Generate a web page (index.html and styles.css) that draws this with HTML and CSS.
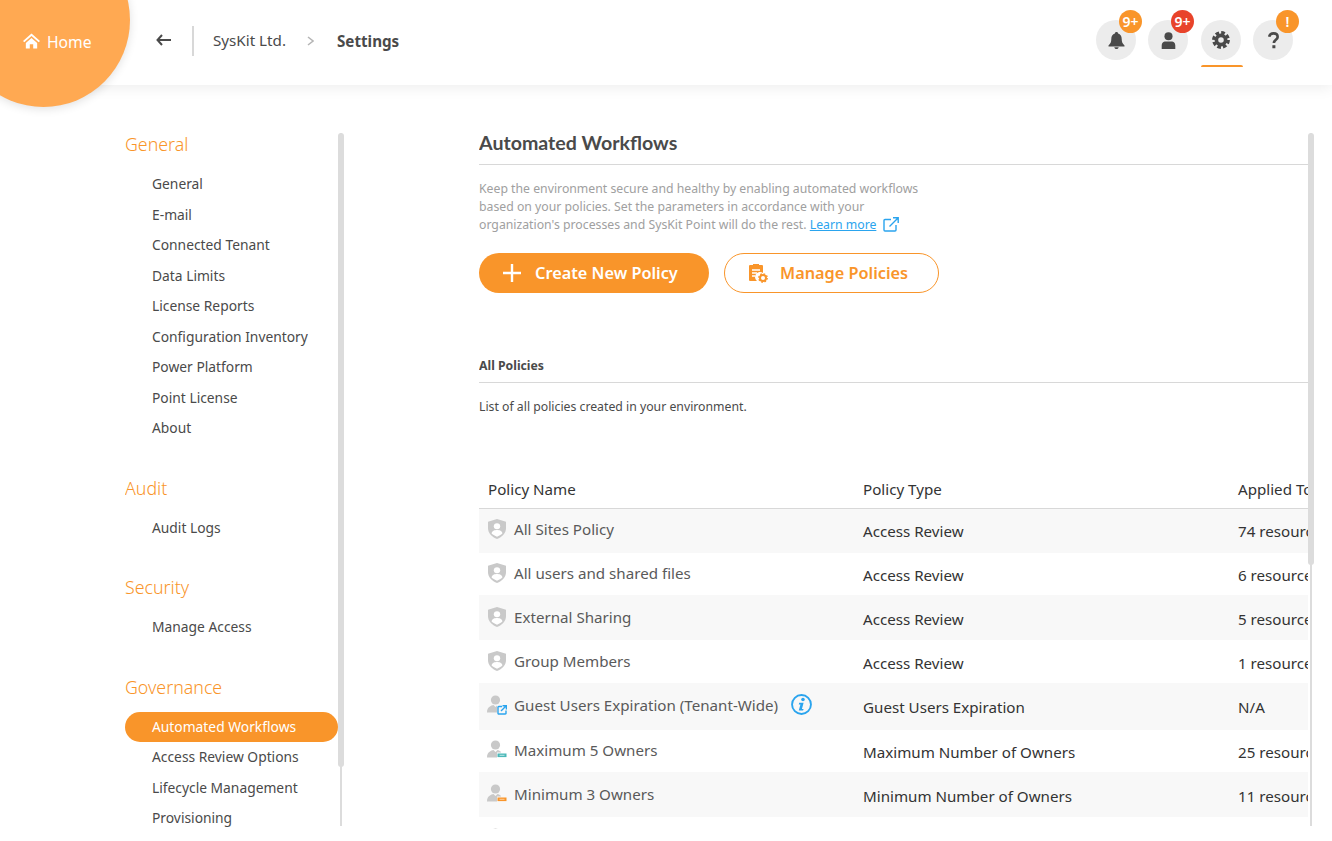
FILE: index.html
```html
<!DOCTYPE html>
<html lang="en">
<head>
  <meta charset="UTF-8">
  <meta name="viewport" content="width=device-width, initial-scale=1.0">
  <title>Settings</title>
  <link rel="stylesheet" href="styles.css">
</head>
<body>
  <svg class="defs" width="0" height="0">
    <symbol id="shield" viewBox="0 0 18 22" preserveAspectRatio="none">
      <path d="M9 0 L18 3 V10 C18 16 14 20 9 22 C4 20 0 16 0 10 V3 Z" fill="#c9c9c9"/>
      <circle cx="9" cy="8" r="3.2" fill="#fff"/>
      <path d="M3.6 16 C4 12.6 6.4 12 9 12 C11.6 12 14 12.6 14.4 16 C12.8 17.6 11 18.6 9 19.4 C7 18.6 5.2 17.6 3.6 16 Z" fill="#fff"/>
    </symbol>
    <symbol id="owner" viewBox="0 0 20 18">
      <circle cx="8.5" cy="5" r="4.6" fill="#c9c9c9"/>
      <path d="M0 17.5 C0 12 4 10.5 6.5 10 L8.5 12 L10.5 10 C12 10.3 13 11 14 12 V17.5 Z" fill="#c9c9c9"/>
    </symbol>
  </svg>

  <header class="topbar">
    <a class="home" href="#">
      <svg class="home-icon" viewBox="0 0 18 16"><path d="M9 0 L18 8 L16.6 9.4 L9 2.8 L1.4 9.4 L0 8 Z M3 10 L9 4.8 L15 10 V16 H10.8 V11.5 H7.2 V16 H3 Z" fill="#fff"/></svg>
      Home
    </a>
    <div class="crumbs">
      <svg class="back" viewBox="0 0 15 12"><path d="M6 1 L1.5 6 L6 11 M2 6 H15" fill="none" stroke="#4a4a4a" stroke-width="2"/></svg>
      <span class="crumb-sep"></span>
      <span class="crumb">SysKit Ltd.</span>
      <svg class="chevron" viewBox="0 0 7 10"><path d="M1 1 L6 5 L1 9" fill="none" stroke="#b5b5b5" stroke-width="1.5"/></svg>
      <strong class="crumb-current">Settings</strong>
    </div>
    <div class="actions">
      <div class="action">
        <svg viewBox="0 0 16 17"><path d="M8 0 C9 0 9.6 .7 9.6 1.6 C12 2.2 13.2 4.2 13.2 7 C13.2 10 14 11.6 16 13.4 V14.4 H0 V13.4 C2 11.6 2.8 10 2.8 7 C2.8 4.2 4 2.2 6.4 1.6 C6.4 .7 7 0 8 0 Z M5.8 15.2 H10.2 C10 16.4 9.2 17 8 17 C6.8 17 6 16.4 5.8 15.2 Z" fill="#4a4a4a"/></svg>
        <span class="badge badge-orange">9+</span>
      </div>
      <div class="action">
        <svg viewBox="0 0 14 16"><circle cx="7" cy="4" r="3.8" fill="#4a4a4a"/><path d="M0.6 16 V13 C0.6 10 2.4 9 4 9 H10 C11.6 9 13.4 10 13.4 13 V16 Z" fill="#4a4a4a"/></svg>
        <span class="badge badge-red">9+</span>
      </div>
      <div class="action action-active">
        <svg class="gear" viewBox="0 0 18 18"><circle cx="9" cy="9" r="7.2" fill="none" stroke="#4a4a4a" stroke-width="3.4" stroke-dasharray="3.6 2.05"/><circle cx="9" cy="9" r="4.6" fill="none" stroke="#4a4a4a" stroke-width="3.6"/></svg>
      </div>
      <div class="action">
        <svg viewBox="0 0 12 18"><path d="M1.5 5 C1.8 2.6 3.6 1.5 6 1.5 C8.6 1.5 10.4 3 10.4 5.2 C10.4 8.2 6.4 8.2 6.4 11.6" fill="none" stroke="#4a4a4a" stroke-width="2.8"/><rect x="4.8" y="14" width="3.2" height="3.2" fill="#4a4a4a"/></svg>
        <span class="badge badge-orange">!</span>
      </div>
    </div>
  </header>

  <div class="layout">
    <nav class="sidenav">
      <div class="nav-list">
        <h3>General</h3>
        <ul>
          <li>General</li>
          <li>E-mail</li>
          <li>Connected Tenant</li>
          <li>Data Limits</li>
          <li>License Reports</li>
          <li>Configuration Inventory</li>
          <li>Power Platform</li>
          <li>Point License</li>
          <li>About</li>
        </ul>
        <h3>Audit</h3>
        <ul>
          <li>Audit Logs</li>
        </ul>
        <h3>Security</h3>
        <ul>
          <li>Manage Access</li>
        </ul>
        <h3>Governance</h3>
        <ul>
          <li class="active">Automated Workflows</li>
          <li>Access Review Options</li>
          <li>Lifecycle Management</li>
          <li>Provisioning</li>
        </ul>
      </div>
      <div class="scrollbar"><span class="thumb thumb-nav"></span></div>
    </nav>

    <main class="content">
      <div class="content-inner">
        <h1>Automated Workflows</h1>
        <p class="intro">Keep the environment secure and healthy by enabling automated workflows based on your policies. Set the parameters in accordance with your organization's processes and SysKit Point will do the rest. <a href="#">Learn more</a>
          <svg class="ext" viewBox="0 0 16 15"><path d="M8 2.5 H2 A1 1 0 0 0 1 3.5 V13 A1 1 0 0 0 2 14 H12 A1 1 0 0 0 13 13 V8 M6.5 9.5 L15 1 M10 .8 H15.2 V6" fill="none" stroke="#2aa4ee" stroke-width="1.4"/></svg>
        </p>
        <div class="buttons">
          <button class="btn btn-primary">
            <svg viewBox="0 0 18 18"><path d="M9 0 V18 M0 9 H18" stroke="#fff" stroke-width="2.4"/></svg>
            Create New Policy
          </button>
          <button class="btn btn-outline">
            <svg viewBox="0 0 20 20"><path d="M2 2 H5 V1 H11 V2 H14 C15 2 15 3 15 3 V10 A5 5 0 0 0 9 18 H2 C1 18 1 17 1 17 V3 C1 3 1 2 2 2 Z" fill="#f9952a"/><path d="M4 7 H12 M4 10 H9 M4 13 H7" stroke="#fff" stroke-width="1.3"/><circle cx="15" cy="15" r="3" fill="none" stroke="#f9952a" stroke-width="2"/><circle cx="15" cy="15" r="4.2" fill="none" stroke="#f9952a" stroke-width="1.4" stroke-dasharray="1.6 1.7"/></svg>
            Manage Policies
          </button>
        </div>

        <h2>All Policies</h2>
        <p class="sub">List of all policies created in your environment.</p>

        <table class="policies">
          <thead>
            <tr><th>Policy Name</th><th>Policy Type</th><th>Applied To</th></tr>
          </thead>
          <tbody>
            <tr>
              <td><span class="name"><svg class="ico"><use href="#shield"/></svg>All Sites Policy</span></td>
              <td>Access Review</td><td>74 resources</td>
            </tr>
            <tr>
              <td><span class="name"><svg class="ico"><use href="#shield"/></svg>All users and shared files</span></td>
              <td>Access Review</td><td>6 resources</td>
            </tr>
            <tr>
              <td><span class="name"><svg class="ico"><use href="#shield"/></svg>External Sharing</span></td>
              <td>Access Review</td><td>5 resources</td>
            </tr>
            <tr>
              <td><span class="name"><svg class="ico"><use href="#shield"/></svg>Group Members</span></td>
              <td>Access Review</td><td>1 resource</td>
            </tr>
            <tr>
              <td><span class="name">
                <svg class="ico ico-owner" viewBox="0 0 20 20"><use href="#owner" width="20" height="18"/><path d="M10 10 H20 V20 H10 Z" fill="#f8f8f8"/><path d="M15 11.5 H12 A.8 .8 0 0 0 11 12.5 V18.2 A.8 .8 0 0 0 12 19 H18 A.8 .8 0 0 0 19 18 V15.5 M14 16 L19 11 M15.5 10.8 H19.4 V14.6" fill="none" stroke="#2aa4ee" stroke-width="1.4"/></svg>
                Guest Users Expiration (Tenant-Wide)
                <svg class="info" viewBox="0 0 20 20"><circle cx="10" cy="10" r="9" fill="none" stroke="#2aa4ee" stroke-width="1.8"/><circle cx="11.4" cy="5.2" r="1.7" fill="#2aa4ee"/><path d="M7.8 8.4 H12 L10.4 14.2 H12 L11.5 15.8 H7.4 L9 10 H7.4 Z" fill="#2aa4ee"/></svg>
              </span></td>
              <td>Guest Users Expiration</td><td>N/A</td>
            </tr>
            <tr>
              <td><span class="name">
                <svg class="ico ico-owner" viewBox="0 0 20 20"><use href="#owner" width="20" height="18"/><rect x="10" y="12.5" width="10" height="5.5" fill="#fff"/><rect x="10.5" y="13.5" width="9" height="3.6" fill="#4bb8b8"/><path d="M12.5 15.3 H17.5" stroke="#bfe6e6" stroke-width="1"/></svg>
                Maximum 5 Owners
              </span></td>
              <td>Maximum Number of Owners</td><td>25 resources</td>
            </tr>
            <tr>
              <td><span class="name">
                <svg class="ico ico-owner" viewBox="0 0 20 20"><use href="#owner" width="20" height="18"/><rect x="10" y="12.5" width="10" height="5.5" fill="#f8f8f8"/><rect x="10.5" y="13.5" width="9" height="3.6" fill="#f9952a"/><path d="M12.5 15.3 H17.5" stroke="#fcd09f" stroke-width="1"/></svg>
                Minimum 3 Owners
              </span></td>
              <td>Minimum Number of Owners</td><td>11 resources</td>
            </tr>
            <tr>
              <td><span class="name"><svg class="ico ico-owner" viewBox="0 0 20 20"><use href="#owner" width="20" height="18"/></svg>Owners Policy</span></td>
              <td>Minimum Number of Owners</td><td>3 resources</td>
            </tr>
          </tbody>
        </table>
      </div>
      <div class="scrollbar"><span class="thumb thumb-main"></span></div>
    </main>
  </div>
</body>
</html>
```

FILE: styles.css
```css
* {
  box-sizing: border-box;
}
html, body {
  height: 100%;
}
body {
  margin: 0;
  overflow: hidden;
  background: #fff;
  color: #4a4a4a;
  font-family: "Noto Sans", "Open Sans", sans-serif;
  font-size: 14px;
}
.defs {
  position: absolute;
}

/* top bar */
.topbar {
  position: relative;
  display: flex;
  align-items: center;
  justify-content: space-between;
  height: 85px;
  padding: 0 39px 0 156px;
  background: #fff;
  box-shadow: 0 2px 14px rgba(0, 0, 0, 0.08);
}
.home {
  position: absolute;
  left: -43px;
  top: -67px;
  width: 173px;
  height: 174px;
  border-radius: 50%;
  background: #ffa952;
  box-shadow: 0 2px 10px rgba(0, 0, 0, 0.12);
  color: #fff;
  font-size: 15.7px;
  text-decoration: none;
  display: flex;
  align-items: center;
  padding: 44px 0 0 66px;
  gap: 7px;
  white-space: nowrap;
}
.home-icon {
  width: 17px;
  height: 16px;
  margin-top: -2px;
}
.crumbs {
  display: flex;
  align-items: center;
  font-size: 15.2px;
  margin-top: -4px;
}
.back {
  width: 15px;
  height: 12px;
  margin-top: -2px;
}
.crumb-sep {
  width: 2px;
  height: 30px;
  background: #d8d8d8;
  margin: 0 19px 0 21px;
}
.crumb {
  margin-top: -2px;
}
.chevron {
  width: 7px;
  height: 10px;
  margin: 0 23px 0 21px;
}
.crumb-current {
  font-weight: 700;
}
.actions {
  display: flex;
  gap: 12px;
  margin-top: -5px;
}
.action {
  position: relative;
  display: flex;
  align-items: center;
  justify-content: center;
  width: 40px;
  height: 40px;
  border-radius: 50%;
  background: #ececec;
}
.action svg {
  height: 17px;
  width: 17px;
}
.action svg.gear {
  height: 18px;
  width: 18px;
}
.action-active {
  margin-left: 1px;
}
.action-active::after {
  content: "";
  position: absolute;
  left: 0;
  right: -2px;
  bottom: -7px;
  height: 2px;
  border-radius: 2px 2px 0 0;
  background: #f9952a;
}
.badge {
  position: absolute;
  top: -10px;
  right: -6px;
  width: 23px;
  height: 23px;
  border-radius: 50%;
  color: #fff;
  font-size: 14px;
  font-weight: 600;
  line-height: 23px;
  text-align: center;
}
.badge-orange {
  background: #f9952a;
}
.badge-red {
  background: #e8432a;
}

/* page */
.layout {
  display: flex;
  height: 744px;
  padding: 48px 18px 0 125px;
}
.sidenav {
  display: flex;
  width: 219px;
  flex: none;
  overflow: hidden;
}
.nav-list {
  width: 213px;
  flex: none;
  margin-top: -1px;
}
.nav-list h3 {
  margin: 0;
  color: #f9952a;
  font-size: 17.8px;
  font-weight: 300;
  line-height: 24px;
  padding-bottom: 13px;
}
.nav-list ul {
  list-style: none;
  margin: 0 0 32px;
  padding: 0;
}
.nav-list li {
  height: 30.5px;
  line-height: 30.5px;
  padding-left: 27px;
  font-size: 13.82px;
  white-space: nowrap;
}
.nav-list li.active {
  background: #f9952a;
  color: #fff;
  border-radius: 15px;
}
.scrollbar {
  position: relative;
  width: 6px;
  flex: none;
  margin-bottom: 3px;
}
.scrollbar::before {
  content: "";
  position: absolute;
  left: 2px;
  top: 0;
  bottom: 0;
  width: 2px;
  background: #dcdcdc;
}
.thumb {
  position: absolute;
  left: 0;
  top: 0;
  width: 6px;
  border-radius: 3px;
  background: #dcdcdc;
}
.thumb-nav {
  height: 634px;
}
.thumb-main {
  height: 432px;
}
.content {
  display: flex;
  flex: 1;
  min-width: 0;
  margin-left: 135px;
}
.content-inner {
  flex: 1;
  min-width: 0;
  overflow: hidden;
}
.content h1 {
  margin: -2px 0 0;
  height: 34px;
  border-bottom: 1px solid #d8d8d8;
  font-family: "Lato", "Noto Sans", sans-serif;
  font-size: 19.6px;
  font-weight: 700;
  line-height: 24px;
  color: #4a4a4a;
}
.intro {
  width: 450px;
  margin: 15px 0 0;
  color: #a0a0a0;
  font-size: 12.25px;
  line-height: 18px;
}
.intro a {
  color: #2aa4ee;
}
.ext {
  width: 16px;
  height: 15px;
  margin-left: 3px;
  vertical-align: -3px;
}
.buttons {
  display: flex;
  gap: 15px;
  margin-top: 19px;
}
.btn {
  display: flex;
  align-items: center;
  height: 40px;
  border-radius: 20px;
  font-family: inherit;
  font-size: 16.3px;
  font-weight: 600;
}
.btn-primary {
  width: 230px;
  gap: 14px;
  padding: 0 0 0 24px;
  border: 0;
  background: #f9952a;
  color: #fff;
}
.btn-primary svg {
  width: 18px;
  height: 18px;
}
.btn-outline {
  width: 215px;
  gap: 12px;
  padding: 0 0 0 23px;
  border: 1px solid #f9952a;
  background: #fff;
  color: #f9952a;
}
.btn-outline svg {
  width: 20px;
  height: 20px;
}
.content h2 {
  margin: 62px 0 0;
  height: 28px;
  border-bottom: 1px solid #d8d8d8;
  font-size: 12.25px;
  font-weight: 700;
  line-height: 22px;
  color: #4a4a4a;
}
.sub {
  margin: 15px 0 0;
  font-size: 12.25px;
  line-height: 18px;
}
.policies {
  width: 1125px;
  margin-top: 54px;
  border-collapse: collapse;
  table-layout: fixed;
  font-size: 15.15px;
  color: #333;
}
.policies th {
  height: 38px;
  padding: 0 9px;
  border-bottom: 1px solid #d8d8d8;
  font-weight: 400;
  text-align: left;
}
.policies td {
  height: 44px;
  padding: 2px 9px 0;
  white-space: nowrap;
  overflow: hidden;
}
.policies tbody tr:nth-child(odd) {
  background: #f8f8f8;
}
.policies tr:first-child td {
  height: 45px;
  padding-top: 0;
}
.policies tr:nth-child(2) td,
.policies tr:nth-child(6) td {
  height: 42px;
}
.policies tr:nth-child(3) td,
.policies tr:nth-child(7) td {
  height: 45px;
}
.policies tr:nth-child(4) td {
  height: 43px;
}
.policies tr:nth-child(5) td {
  height: 47px;
  padding-top: 0;
}
.name {
  display: flex;
  align-items: center;
  color: #5a5a5a;
  margin-top: -4px;
}
.ico {
  width: 18px;
  height: 20px;
  margin-right: 8px;
  flex: none;
}
.ico-owner {
  width: 20px;
  height: 20px;
  margin: 0 7px 0 -1px;
}
.info {
  width: 21px;
  height: 21px;
  margin-left: 13px;
}
```
